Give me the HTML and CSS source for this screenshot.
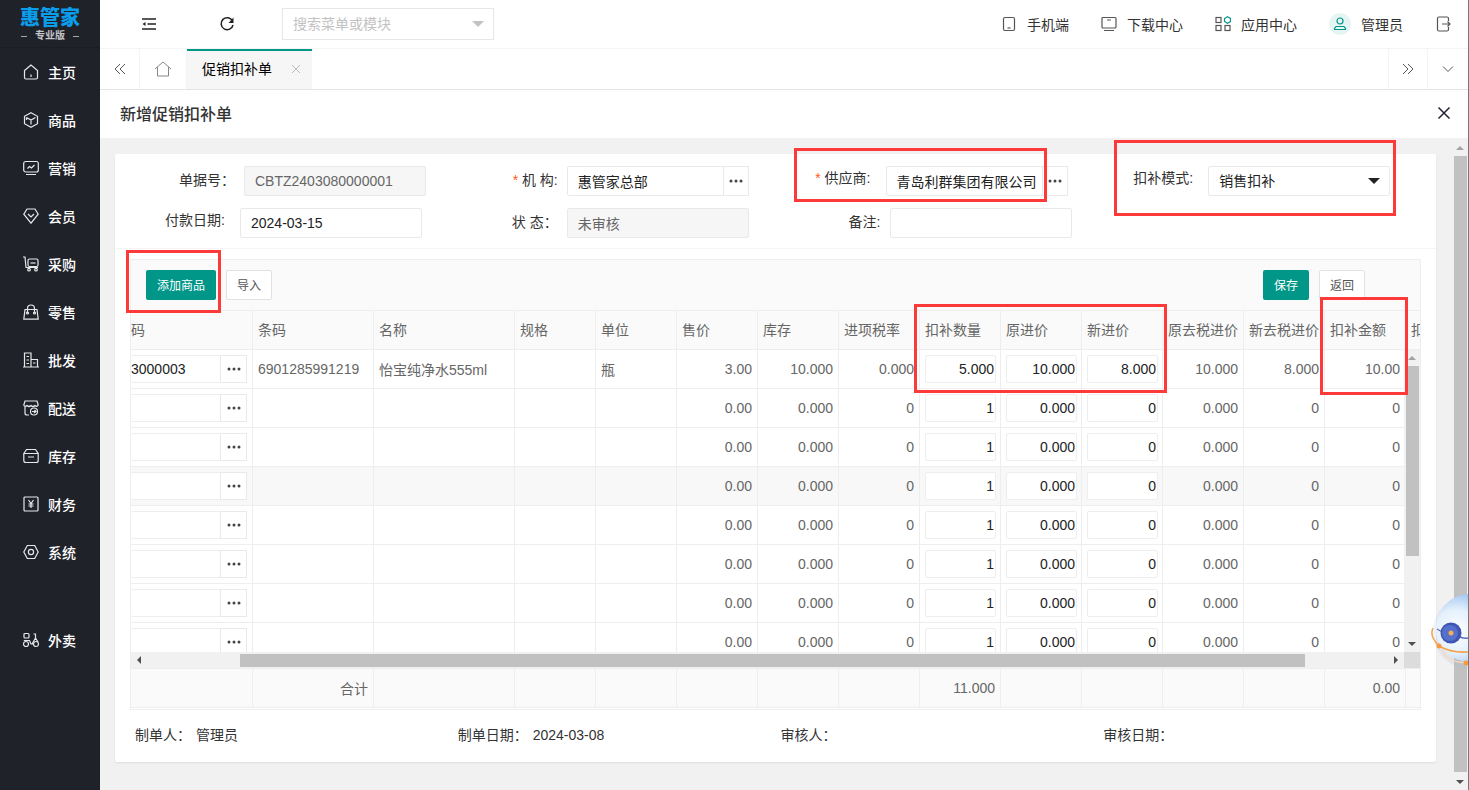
FILE: index.html
```html
<!DOCTYPE html>
<html lang="zh-CN">
<head>
    <meta charset="UTF-8">
    <meta name="viewport" content="width=device-width, initial-scale=1.0">
    <title>促销扣补单</title>
    <link rel="stylesheet" href="styles.css">
</head>
<body>
    <aside class="sidebar">
        <div class="logo">
            <strong>惠管家</strong>
            <span>专业版</span>
        </div>
        <nav class="menu">
            <a href="#"><svg viewBox="0 0 16 16"><path d="M8 1 1.500 6.500v7q0 1.500 1.500 1.500h10q1.500 0 1.500-1.500v-7zM8 10.500v2.500"/></svg>主页</a>
            <a href="#"><svg viewBox="0 0 16 16"><path d="M8 .8 14.500 4.300v7.400L8 15.200 1.500 11.700V4.300zM3.500 5.500 8 8l4.500-2.500M8 8v4.500M3.500 5.500v2.500"/></svg>商品</a>
            <a href="#"><svg viewBox="0 0 16 16"><rect x=".7" y="1.500" width="14.600" height="10.500" rx="2"/><path d="M3 14.500h10M4.500 8.500l2-2 2 1.500 3-3"/></svg>营销</a>
            <a href="#"><svg viewBox="0 0 16 16"><path d="M4 1h8l3.200 5.200L8 15.200.8 6.200zM5 6l3 3 3-3"/></svg>会员</a>
            <a href="#"><svg viewBox="0 0 16 16"><path d="M0 1h2l1 10.500h12"/><rect x="5" y="3" width="10" height="7.500" rx="1.500"/><path d="M7.500 7h5"/><circle cx="6" cy="13.700" r="1.300"/><circle cx="13" cy="13.700" r="1.300"/></svg>采购</a>
            <a href="#"><svg viewBox="0 0 16 16"><path d="M2 5.500h12l1.200 9.700H.8zM4.500 9V4.500a3.500 3.500 0 0 1 7 0V9"/><circle cx="4.500" cy="9" r="1"/><circle cx="11.500" cy="9" r="1"/></svg>零售</a>
            <a href="#"><svg viewBox="0 0 16 16"><path d="M0 15h16M1.500 15V1h6.500v14M8 7.500h6.500V15M3.500 4.500h2.500M3.500 8h2.500M3.500 11.500h2.500M10 11h2.500"/></svg>批发</a>
            <a href="#"><svg viewBox="0 0 16 16"><path d="M2 1h12l1.200 4q-1.200 2.500-3.200.5-2 2-4 0-2 2-4 0Q2 7.500.8 5zM2 7v6q0 2 2 2h2"/><circle cx="11" cy="11.500" r="3.500"/><path d="M9 11.500h4M11.500 10l1.500 1.500L11 13"/></svg>配送</a>
            <a href="#"><svg viewBox="0 0 16 16"><path d="M.8 5.500 3.500 1.500h9l2.700 4v7q0 2-2 2H2.800q-2 0-2-2zM.8 5.500h14.400M5 9h6"/></svg>库存</a>
            <a href="#"><svg viewBox="0 0 16 16"><rect x="1" y="1" width="14" height="14" rx="1"/><path d="M5.500 4 8 7.500 10.500 4M8 7.500V12M5.500 8h5M5.500 10h5"/></svg>财务</a>
            <a href="#"><svg viewBox="0 0 16 16"><path d="M4.300 1.500h7.400L15.200 8l-3.500 6.500H4.300L.8 8z"/><circle cx="8" cy="8" r="2.600"/></svg>系统</a>
            <a href="#" class="takeout"><svg viewBox="0 0 16 16"><rect x="1" y="1.500" width="5" height="4.500" rx="1"/><circle cx="3" cy="12" r="2.500"/><circle cx="13" cy="12" r="2.500"/><path d="M.8 8.500h5.700l1.500 3.500h2.500M10.500 2h2v4L15 10M12.500 6 9 12"/></svg>外卖</a>
        </nav>
    </aside>

    <div class="page">
        <header class="topbar">
            <button type="button" class="icon-btn" aria-label="收起菜单"><svg viewBox="0 0 16 16"><path d="M1 3h14M6.500 8H15M1 13h14"/><path class="solid" d="M4.500 6v4L1.500 8z"/></svg></button>
            <button type="button" class="icon-btn" aria-label="刷新"><svg viewBox="0 0 16 16"><path d="M13.500 5A6 6 0 1 0 14 9"/><path class="solid" d="M14.500 1.500V7H9.500z"/></svg></button>
            <div class="search">
                <input type="text" placeholder="搜索菜单或模块" aria-label="搜索菜单或模块">
            </div>
            <nav class="top-links">
                <a href="#"><svg viewBox="0 0 16 16"><rect x="2.500" y="1.500" width="11" height="13" rx="1.500"/><path d="M6.500 12h3"/></svg>手机端</a>
                <a href="#"><svg viewBox="0 0 16 16"><rect x="1" y="1.500" width="14" height="10.500" rx="1"/><path d="M6 4h4M3 14.500h10"/></svg>下载中心</a>
                <a href="#"><svg viewBox="0 0 16 16"><rect x="1" y="1.500" width="5" height="5"/><rect x="1" y="9.500" width="5" height="5"/><rect x="10" y="9.500" width="5" height="5"/><path class="teal" d="M12.500.8l3 1.700v3l-3 1.700-3-1.700v-3z"/></svg>应用中心</a>
                <a href="#" class="user"><svg viewBox="0 0 22 22"><circle class="disc" cx="11" cy="11" r="11"/><circle class="teal" cx="11" cy="8" r="3"/><path class="teal" d="M7 13.500h8l1.500 2v1h-11v-1z"/></svg>管理员</a>
                <a href="#" aria-label="退出"><svg viewBox="0 0 16 16"><path d="M13.500 5V2.500q0-1.500-1.500-1.500H4Q2.500 1 2.500 2.500v11Q2.500 15 4 15h8q1.500 0 1.500-1.500V11M7 8h8M12.500 5.500 15 8l-2.500 2.500"/></svg></a>
            </nav>
        </header>

        <nav class="tabs">
            <button type="button" class="tab-prev" aria-label="向左"><svg viewBox="0 0 16 16"><path d="M8 3 3 8l5 5M13 3 8 8l5 5"/></svg></button>
            <a href="#" class="tab-home" aria-label="首页"><svg viewBox="0 0 18 16"><path d="M1 8 9 1l8 7M3.500 6v9h11V6"/></svg></a>
            <div class="tab-active">
                <a href="#">促销扣补单</a>
                <button type="button" aria-label="关闭标签"><svg viewBox="0 0 16 16"><path d="M4 4l8 8M12 4l-8 8"/></svg></button>
            </div>
            <button type="button" class="tab-next" aria-label="向右"><svg viewBox="0 0 16 16"><path d="M3 3l5 5-5 5M8 3l5 5-5 5"/></svg></button>
            <button type="button" class="tab-more" aria-label="更多"><svg viewBox="0 0 16 16"><path d="M3 5.500l5 5 5-5"/></svg></button>
        </nav>

        <div class="title-bar">
            <h1>新增促销扣补单</h1>
            <button type="button" aria-label="关闭"><svg viewBox="0 0 16 16"><path d="M2.500 2.500l11 11M13.500 2.500l-11 11"/></svg></button>
        </div>

        <div class="content">
            <main class="card">
                <form class="fields">
                    <div class="field">
                        <label for="billNo">单据号：</label>
                        <input type="text" id="billNo" value="CBTZ2403080000001" disabled>
                    </div>
                    <div class="field">
                        <label for="org"><i>*</i> 机 构:</label>
                        <div class="picker">
                            <input type="text" id="org" value="惠管家总部">
                            <button type="button" aria-label="选择机构"><svg viewBox="0 0 14 4"><circle cx="2" cy="2" r="1.500"/><circle cx="7" cy="2" r="1.500"/><circle cx="12" cy="2" r="1.500"/></svg></button>
                        </div>
                    </div>
                    <div class="field narrow">
                        <label for="supplier"><i>*</i> 供应商:</label>
                        <div class="picker">
                            <input type="text" id="supplier" value="青岛利群集团有限公司">
                            <button type="button" aria-label="选择供应商"><svg viewBox="0 0 14 4"><circle cx="2" cy="2" r="1.500"/><circle cx="7" cy="2" r="1.500"/><circle cx="12" cy="2" r="1.500"/></svg></button>
                        </div>
                        <span class="mark mark-supplier"></span>
                    </div>
                    <div class="field narrow">
                        <label for="mode">扣补模式:</label>
                        <div class="select">
                            <select id="mode">
                                <option>销售扣补</option>
                            </select>
                        </div>
                        <span class="mark mark-mode"></span>
                    </div>
                    <div class="field narrow">
                        <label for="payDate">付款日期:</label>
                        <input type="text" id="payDate" value="2024-03-15">
                    </div>
                    <div class="field">
                        <label for="status">状 态：</label>
                        <input type="text" id="status" value="未审核" disabled>
                    </div>
                    <div class="field">
                        <label for="remark">备注:</label>
                        <input type="text" id="remark">
                    </div>
                </form>

                <section class="grid">
                    <div class="toolbar">
                        <button type="button" class="btn primary">添加商品</button>
                        <button type="button" class="btn">导入</button>
                        <button type="button" class="btn primary save">保存</button>
                        <button type="button" class="btn">返回</button>
                    </div>
                    <div class="grid-head">
                        <table>
                            <thead>
                                <tr>
                                    <th class="w-code">码</th>
                                    <th class="w-bar">条码</th>
                                    <th class="w-name">名称</th>
                                    <th>规格</th>
                                    <th>单位</th>
                                    <th>售价</th>
                                    <th>库存</th>
                                    <th>进项税率</th>
                                    <th>扣补数量</th>
                                    <th>原进价</th>
                                    <th>新进价</th>
                                    <th>原去税进价</th>
                                    <th>新去税进价</th>
                                    <th>扣补金额</th>
                                    <th>扣</th>
                                </tr>
                            </thead>
                        </table>
                    </div>
                    <div class="grid-view">
                        <div class="grid-body">
                            <table>
                                <tbody id="rows"></tbody>
                            </table>
                        </div>
                        <div class="vbar"><i class="up"></i><b></b><i class="down"></i></div>
                    </div>
                    <div class="hbar"><i class="left"></i><b></b><i class="right"></i><span></span></div>
                    <div class="grid-foot">
                        <table>
                            <tbody>
                                <tr>
                                    <td class="w-code"></td>
                                    <td class="w-bar num">合计</td>
                                    <td class="w-name"></td>
                                    <td></td>
                                    <td></td>
                                    <td></td>
                                    <td></td>
                                    <td></td>
                                    <td class="num">11.000</td>
                                    <td></td>
                                    <td></td>
                                    <td></td>
                                    <td></td>
                                    <td class="num">0.00</td>
                                    <td></td>
                                </tr>
                            </tbody>
                        </table>
                    </div>
                    <span class="mark mark-add"></span>
                    <span class="mark mark-price"></span>
                    <span class="mark mark-amount"></span>
                </section>

                <footer class="sign">
                    <p>制单人： <span>管理员</span></p>
                    <p>制单日期： <span>2024-03-08</span></p>
                    <p>审核人：</p>
                    <p>审核日期：</p>
                </footer>
            </main>
            <div class="vbar page-bar"><i class="up"></i><b></b><i class="down"></i></div>
        </div>
    </div>

    <svg class="robot" viewBox="0 0 40 84">
        <defs>
            <radialGradient id="head" cx="30%" cy="55%" r="65%">
                <stop offset="0" stop-color="#ffffff"/>
                <stop offset=".5" stop-color="#e3f0fc"/>
                <stop offset="1" stop-color="#8db8ec"/>
            </radialGradient>
        </defs>
        <circle cx="42" cy="42" r="37" fill="#a9b8d8" opacity=".2"/>
        <circle cx="42" cy="38" r="34" fill="url(#head)"/>
        <path d="M9 39q3 2 6 3M32 47q5 2 8 1" fill="none" stroke="#5b6fb8" stroke-width="1.500"/>
        <circle cx="23" cy="43" r="10.500" fill="#3f56b5"/>
        <circle cx="22" cy="43" r="8" fill="#5571cc"/>
        <circle cx="23" cy="43" r="2.500" fill="#f5ad58"/>
        <path d="M5 38Q1 46 11 56q12 7 29 6" fill="none" stroke="#f5a04a" stroke-width="1.500"/>
        <path d="M15 60q2 12 25 13" fill="none" stroke="#f9d9b8" stroke-width="1.500"/>
        <circle cx="11" cy="56" r="2.500" fill="#f79a3b"/>
        <circle cx="38" cy="73" r="2.500" fill="#f79a3b"/>
    </svg>

    <script>
        const items = [
            { code: '3000003', barcode: '6901285991219', name: '怡宝纯净水555ml', unit: '瓶', price: '3.00', stock: '10.000', tax: '0.000', qty: '5.000', oldPrice: '10.000', newPrice: '8.000', oldNet: '10.000', newNet: '8.000', amount: '10.00' }
        ];

        // pad the list with blank rows
        while (items.length < 8) {
            items.push({ code: '', barcode: '', name: '', unit: '', price: '0.00', stock: '0.000', tax: '0', qty: '1', oldPrice: '0.000', newPrice: '0', oldNet: '0.000', newNet: '0', amount: '0' });
        }

        const tableBody = document.getElementById('rows');
        items.forEach((item, i) => {
            const row = document.createElement('tr');
            if (i === 3) row.className = 'hover';
            row.innerHTML = `
                <td class="w-code"><div class="picker"><input type="text" value="${item.code}" aria-label="商品编码"><button type="button" aria-label="选择商品"><svg viewBox="0 0 14 4"><circle cx="2" cy="2" r="1.500"/><circle cx="7" cy="2" r="1.500"/><circle cx="12" cy="2" r="1.500"/></svg></button></div></td>
                <td class="w-bar">${item.barcode}</td>
                <td class="w-name">${item.name}</td>
                <td></td>
                <td>${item.unit}</td>
                <td class="num">${item.price}</td>
                <td class="num">${item.stock}</td>
                <td class="num">${item.tax}</td>
                <td><input type="text" value="${item.qty}" aria-label="扣补数量"></td>
                <td><input type="text" value="${item.oldPrice}" aria-label="原进价"></td>
                <td><input type="text" value="${item.newPrice}" aria-label="新进价"></td>
                <td class="num">${item.oldNet}</td>
                <td class="num">${item.newNet}</td>
                <td class="num">${item.amount}</td>
                <td></td>
            `;
            tableBody.appendChild(row);
        });
    </script>
</body>
</html>
```
FILE: styles.css
```css
* {
    box-sizing: border-box;
}

body {
    display: flex;
    height: 100vh;
    margin: 0;
    overflow: hidden;
    font-family: "Liberation Sans", "Noto Sans CJK SC", sans-serif;
    font-size: 14px;
    color: #333;
    background-color: #f1f1f1;
    border-right: 1px solid #777;
}

a {
    color: inherit;
    text-decoration: none;
}

button, input, select {
    font-family: inherit;
    font-size: 14px;
    color: #222;
}

button {
    padding: 0;
    border: none;
    background: none;
    cursor: pointer;
}

svg {
    display: block;
    flex: none;
    width: 16px;
    height: 16px;
    fill: none;
    stroke: currentColor;
}

.solid {
    fill: currentColor;
    stroke: none;
}

/* sidebar */
.sidebar {
    flex: none;
    width: 100px;
    color: #fff;
    background-color: #20222a;
}

.logo {
    display: flex;
    flex-direction: column;
    align-items: center;
    height: 48px;
    padding-top: 8px;
    border-bottom: 1px solid #1b1d24;
}

.logo strong {
    font-size: 20px;
    font-weight: 900;
    line-height: 21px;
    color: #0b9dea;
}

.logo span {
    display: flex;
    align-items: center;
    gap: 8px;
    font-size: 10px;
    font-weight: 700;
    line-height: 14px;
    color: #c4c5c8;
}

.logo span::before,
.logo span::after {
    content: "";
    width: 6px;
    height: 1px;
    background-color: #a5a6aa;
}

.menu a {
    display: flex;
    align-items: center;
    gap: 9px;
    height: 48px;
    padding-left: 23px;
    font-weight: 500;
}

.menu svg {
    stroke: #e8e8ea;
    stroke-width: 1.2;
}

.menu .takeout {
    margin-top: 40px;
}

/* top bar */
.page {
    display: flex;
    flex: 1;
    flex-direction: column;
    min-width: 0;
}

.topbar {
    display: flex;
    flex: none;
    align-items: center;
    height: 49px;
    padding: 0 17px 0 41px;
    background-color: #fff;
    border-bottom: 1px solid #f4f4f4;
}

.icon-btn {
    margin-right: 62px;
}

.icon-btn svg {
    stroke-width: 1.5;
}

.search,
.select {
    position: relative;
}

.search {
    margin-left: -15px;
}

.search input {
    width: 212px;
    height: 32px;
    padding: 0 10px;
    border: 1px solid #e6e6e6;
}

.search input::placeholder {
    color: #c2c2c2;
}

.search::after,
.select::after {
    content: "";
    position: absolute;
    top: 13px;
    right: 10px;
    border: 6px solid transparent;
    border-top-color: #c2c2c2;
    border-bottom: none;
    pointer-events: none;
}

.select::after {
    top: 12px;
    border-top-color: #222;
}

.top-links {
    display: flex;
    gap: 32px;
    margin-left: auto;
}

.top-links a {
    display: flex;
    align-items: center;
    gap: 10px;
}

.top-links svg {
    stroke: #555;
    stroke-width: 1.2;
}

.top-links .user svg {
    width: 22px;
    height: 22px;
}

.top-links .teal {
    stroke: #009688;
}

svg .disc {
    fill: #e6f5f3;
    stroke: none;
}

/* tabs */
.tabs {
    display: flex;
    flex: none;
    height: 41px;
    background-color: #fff;
    border-bottom: 1px solid #e4e4e4;
}

.tabs svg {
    stroke: #555;
}

.tab-prev,
.tab-next,
.tab-more,
.tab-home {
    display: flex;
    align-items: center;
    justify-content: center;
    width: 40px;
    border-right: 1px solid #f4f4f4;
}

.tab-home {
    width: 47px;
}

.tab-home svg {
    width: 18px;
    stroke: #888;
}

.tab-active {
    display: flex;
    align-items: center;
    gap: 16px;
    padding: 0 8px 2px 15px;
    color: #000;
    background-color: #f6f6f6;
    border-top: 2px solid #009688;
}

.tab-active a {
    padding-bottom: 2px;
}

.tab-active svg {
    stroke: #bbb;
}

.tab-next {
    margin-left: auto;
    border-left: 1px solid #f4f4f4;
}

.tab-more {
    border-right: none;
}

.title-bar {
    display: flex;
    flex: none;
    align-items: center;
    justify-content: space-between;
    height: 48px;
    padding: 0 16px 2px 20px;
    background-color: #fff;
}

.title-bar h1 {
    margin: 0;
    font-size: 16px;
    font-weight: 500;
}

.title-bar svg {
    stroke: #223;
    stroke-width: 1.5;
}

/* card */
.content {
    display: flex;
    flex: 1;
    align-items: flex-start;
    min-height: 0;
    padding-left: 15px;
}

.card {
    flex: 1;
    min-width: 0;
    margin: 16px 16px 0 0;
    background-color: #fff;
    border-radius: 2px;
    box-shadow: 0 1px 2px rgba(0, 0, 0, 0.08);
}

.fields {
    display: grid;
    grid-template-columns: repeat(4, 1fr);
    row-gap: 12px;
    padding: 12px 15px 10px;
    border-bottom: 1px solid #f4f4f4;
}

.field {
    position: relative;
    display: flex;
    height: 30px;
}

.field label {
    width: 114px;
    padding-right: 9px;
    line-height: 28px;
    text-align: right;
}

.field.narrow label {
    width: 110px;
    padding-right: 15px;
    line-height: 24px;
}

.field label i {
    color: #ff5722;
    font-style: normal;
}

.field input,
.field select {
    width: 182px;
    height: 30px;
    padding: 0 10px;
    background-color: #fff;
    border: 1px solid #e9e9e9;
    border-radius: 2px;
}

.field select {
    appearance: none;
}

.field input:disabled {
    color: #666;
    background-color: #f6f6f6;
}

.picker {
    display: flex;
}

.field .picker input {
    width: 157px;
    padding-right: 0;
}

.picker button {
    display: flex;
    align-items: center;
    justify-content: center;
    width: 26px;
    margin-left: -1px;
    background-color: #fff;
    border: 1px solid #e9e9e9;
}

.picker svg {
    width: 14px;
    height: 4px;
    fill: #444;
    stroke: none;
}

/* grid */
.grid {
    position: relative;
    margin: 10px 15px 0;
    border: 1px solid #eee;
}

.toolbar {
    display: flex;
    align-items: center;
    gap: 10px;
    height: 51px;
    padding: 0 55px 0 15px;
    background-color: #fafafa;
    border-bottom: 1px solid #eee;
}

.btn {
    height: 30px;
    padding: 0 10px 2px;
    font-size: 12px;
    color: #555;
    background-color: #fff;
    border: 1px solid #e2e2e2;
    border-radius: 2px;
}

.btn.primary {
    padding: 0 11px 2px;
    color: #fff;
    background-color: #009688;
    border: none;
}

.btn.save {
    margin-left: auto;
}

.grid-head,
.grid-foot {
    overflow: hidden;
    background-color: #fafafa;
}

.grid-view {
    display: flex;
    height: 302px;
}

.grid-body {
    flex: 1;
    min-width: 0;
    overflow: hidden;
}

table {
    width: 1356px;
    table-layout: fixed;
    border-collapse: separate;
    border-spacing: 0;
    color: #666;
}

th, td {
    width: 81px;
    height: 39px;
    padding: 0 5px;
    font-weight: 400;
    text-align: left;
    white-space: nowrap;
    border-right: 1px solid #eee;
    border-bottom: 1px solid #eee;
}

th {
    padding-bottom: 2px;
}

.w-code {
    width: 122px;
    padding: 0;
}

th.w-code {
    padding-bottom: 2px;
}

.w-bar {
    width: 121px;
}

.w-name {
    width: 141px;
}

.num {
    text-align: right;
}

.hover {
    background-color: #f8f8f8;
}

td input {
    display: block;
    width: 71px;
    height: 28px;
    padding: 0 1px 0 0;
    text-align: right;
    background-color: #fff;
    border: 1px solid #eee;
    border-radius: 2px;
}

td .picker input {
    width: 90px;
    text-align: left;
    border-left: none;
}

td .picker button {
    width: 27px;
}

.grid-foot {
    padding-bottom: 1px;
    border-top: 1px solid #eee;
    background-color: #fff;
}

.grid-foot table {
    background-color: #fafafa;
}

/* scroll bars */
.vbar {
    display: flex;
    flex: none;
    flex-direction: column;
    align-items: center;
    width: 16px;
    padding: 6px 0;
    background-color: #f1f1f1;
}

.vbar b {
    width: 13px;
    height: 190px;
    margin: 6px 0 auto;
    background-color: #c1c1c1;
}

.page-bar {
    align-self: stretch;
    padding: 8px 0 6px;
}

.page-bar b {
    flex: 1;
    margin: 6px 0 8px;
}

.up, .down {
    border: 4px solid transparent;
}

.up {
    border-top: none;
    border-bottom-color: #a3a3a3;
}

.down {
    border-top-color: #505050;
    border-bottom: none;
}

.hbar {
    display: flex;
    align-items: center;
    height: 16px;
    padding-left: 6px;
    background-color: #f1f1f1;
}

.hbar b {
    width: 83%;
    height: 13px;
    margin: 0 auto 0 99px;
    background-color: #c1c1c1;
}

.hbar span {
    width: 16px;
    height: 16px;
    margin-left: 6px;
    background-color: #dcdcdc;
}

.left, .right {
    border: 4px solid transparent;
}

.left {
    border-left: none;
    border-right-color: #505050;
}

.right {
    border-right: none;
    border-left-color: #505050;
}

.sign {
    display: grid;
    grid-template-columns: repeat(4, 1fr);
    padding: 10px 15px 12px;
}

.sign p {
    margin: 0;
    padding-left: 5px;
    line-height: 30px;
}

.sign span {
    margin-left: 1px;
}

/* highlight frames */
.mark {
    position: absolute;
    border: 3px solid #fc3a3a;
    pointer-events: none;
}

.mark-supplier {
    top: -18px;
    left: 18px;
    width: 253px;
    height: 54px;
}

.mark-mode {
    top: -26px;
    left: 16px;
    width: 282px;
    height: 76px;
}

.mark-add {
    top: -10px;
    left: -5px;
    width: 95px;
    height: 63px;
}

.mark-price {
    top: 44px;
    left: 783px;
    width: 253px;
    height: 89px;
}

.mark-amount {
    top: 37px;
    left: 1189px;
    width: 88px;
    height: 98px;
}

.robot {
    position: absolute;
    right: 1px;
    bottom: 116px;
    width: 40px;
    height: 84px;
    stroke: none;
}
```
